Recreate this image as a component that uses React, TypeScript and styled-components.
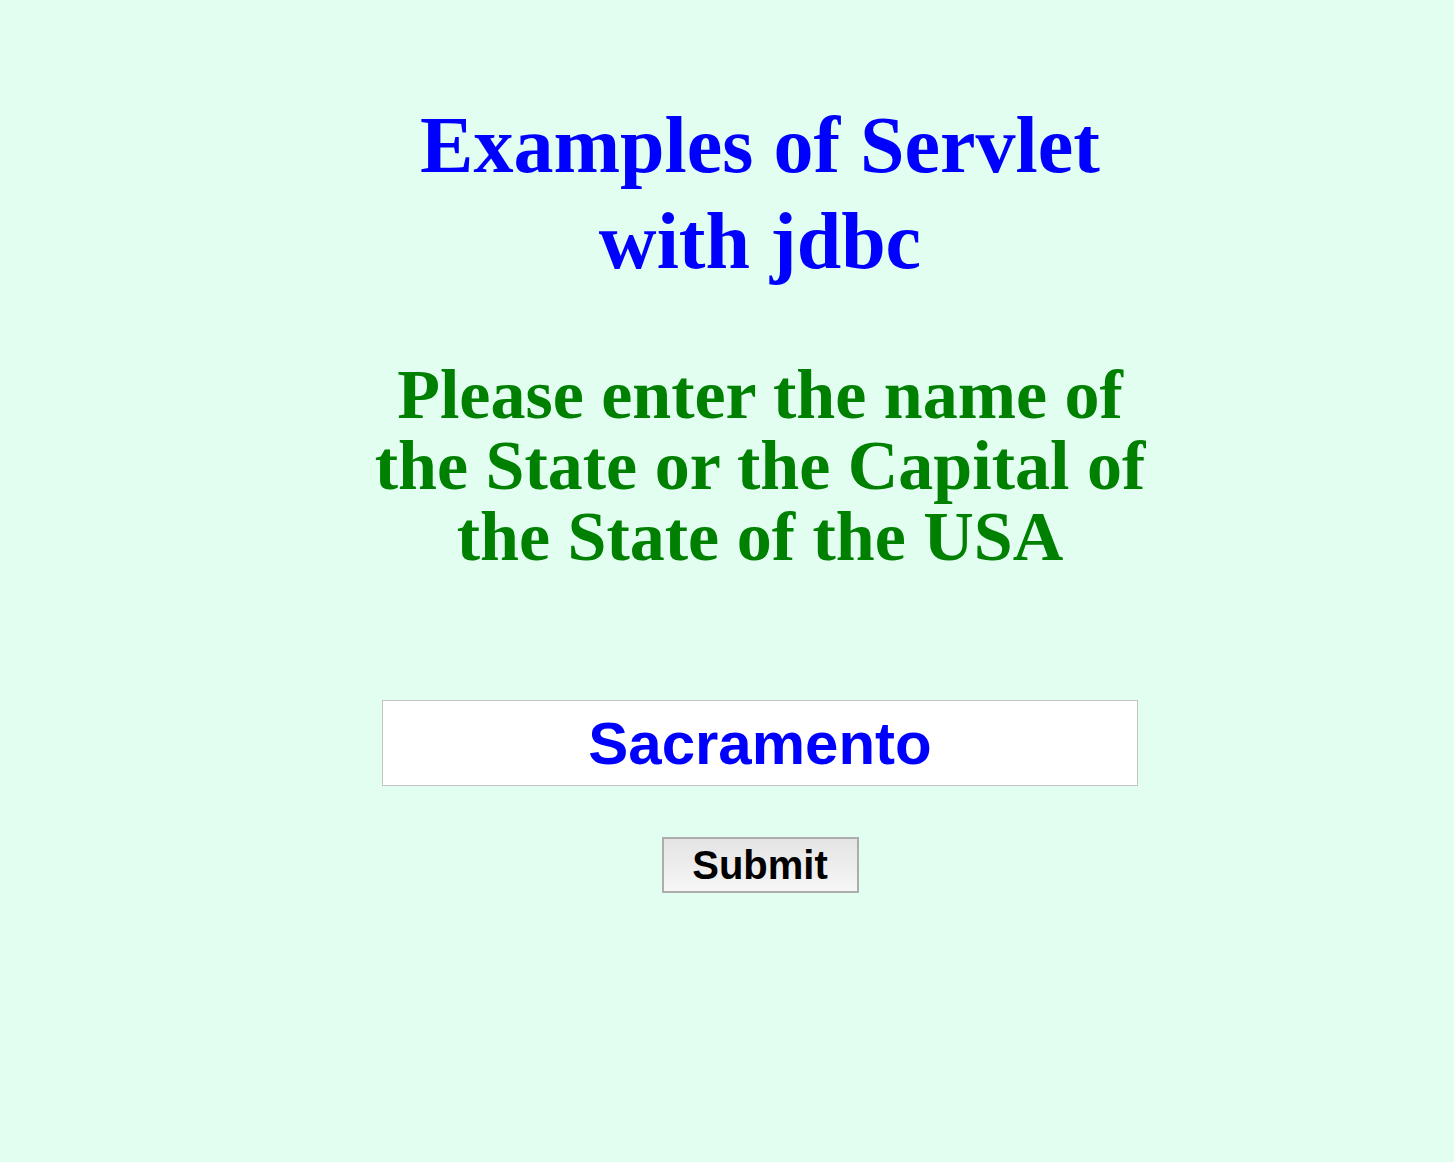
import React from "react";
import styled, { createGlobalStyle } from "styled-components";

const GlobalStyle = createGlobalStyle`
  html, body {
    margin: 0;
    padding: 0;
    background: #e2fef1;
  }
  body {
    min-height: 1162px;
  }
`;

const Page = styled.main`
  box-sizing: border-box;
  width: 100%;
  min-height: 1162px;
  padding: 97px 0 0 66px;
  display: flex;
  justify-content: center;
  background: #e2fef1;
`;

const Column = styled.div`
  width: 800px;
  display: flex;
  flex-direction: column;
  align-items: center;
`;

const Title = styled.h1`
  margin: 0;
  font-family: "Liberation Serif", "Times New Roman", serif;
  font-weight: bold;
  font-size: 80px;
  line-height: 96px;
  color: #0000ff;
  text-align: center;
  width: 720px;
`;

const Prompt = styled.h2`
  margin: 70px 0 0;
  font-family: "Liberation Serif", "Times New Roman", serif;
  font-weight: bold;
  font-size: 70px;
  line-height: 71px;
  color: #008000;
  text-align: center;
  width: 800px;
`;

const Form = styled.form`
  margin-top: 128px;
  display: flex;
  flex-direction: column;
  align-items: center;
  gap: 51px;
`;

const NameInput = styled.input`
  box-sizing: border-box;
  width: 756px;
  height: 86px;
  border: 1px solid #c4c4c4;
  background: #ffffff;
  font-family: "Liberation Sans", Arial, sans-serif;
  font-weight: bold;
  font-size: 60px;
  color: #0000ff;
  text-align: center;
  padding: 0;
  outline: none;
`;

const SubmitButton = styled.button`
  box-sizing: border-box;
  width: 197px;
  height: 56px;
  border: 2px solid #adadad;
  border-radius: 0;
  background: linear-gradient(#e4e4e4, #f6f6f6);
  font-family: "Liberation Sans", Arial, sans-serif;
  font-weight: bold;
  font-size: 40px;
  color: #000000;
  padding: 0;
  cursor: pointer;
`;

export default function App() {
  return (
    <>
      <GlobalStyle />
      <Page>
        <Column>
          <Title>Examples of Servlet with jdbc</Title>
          <Prompt>
            Please enter the name of the State or the Capital of the State of the USA
          </Prompt>
          <Form onSubmit={(e) => e.preventDefault()}>
            <NameInput type="text" defaultValue="Sacramento" />
            <SubmitButton type="submit">Submit</SubmitButton>
          </Form>
        </Column>
      </Page>
    </>
  );
}
